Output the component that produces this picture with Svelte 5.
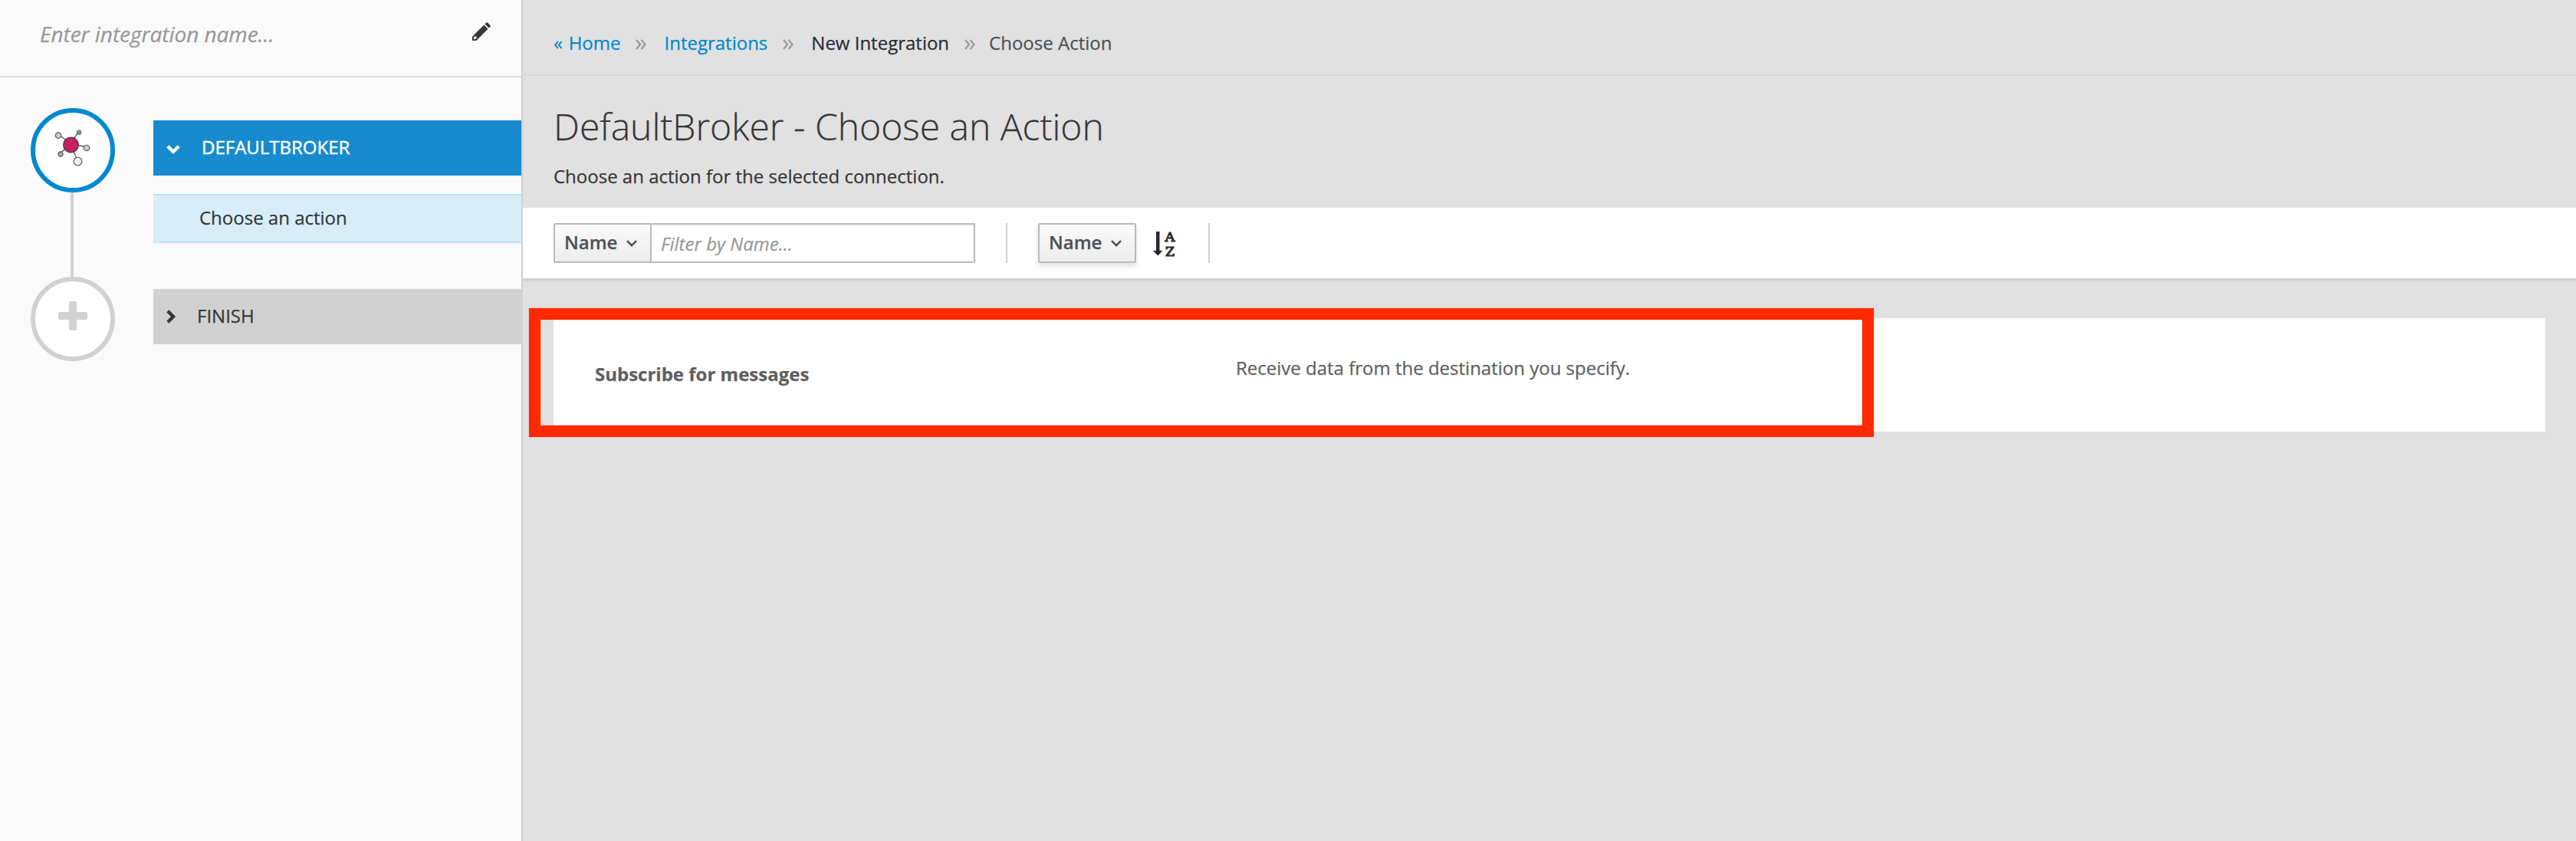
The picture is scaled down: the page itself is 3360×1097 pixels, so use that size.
<script>
  const crumbs = [
    { label: 'Integrations', kind: 'link', cls: 'c2' },
    { label: 'New Integration', kind: 'dark', cls: 'c3' },
    { label: 'Choose Action', kind: 'muted', cls: 'c4' }
  ];
  const actions = [
    { name: 'Subscribe for messages', description: 'Receive data from the destination you specify.' }
  ];
</script>

{#snippet caret()}
  <svg class="caret" width="14" height="9" viewBox="0 0 14 9"><path d="M1 1.2 7 7.2 13 1.2" /></svg>
{/snippet}

<div class="app">
  <aside>
    <header class="name-bar">
      <span class="name">Enter integration name...</span>
      <svg class="pencil" width="24" height="24" viewBox="0 0 24 24">
        <path d="M16.5 2.4 18.3.6Q19.2-.2 20.1.6L23.4 3.9Q24.3 4.9 23.4 5.8L21.6 7.500Z" />
        <path fill-rule="evenodd" d="M15.3 3.500 20.500 8.700 5.300 24H0V18.700ZM1.900 19.700V22.100H4.400L5.700 20.800 5.500 18.600 3.200 18.300Z" />
      </svg>
    </header>
    <div class="steps">
      <div class="track">
        <div class="node active">
          <svg width="44" height="48" viewBox="0 0 44 48">
            <g stroke="#555" stroke-width="1.3">
              <path d="M18.500 18 30 2.500M18.500 18 3 6M18.500 18 40 23M18.500 18 6 31M18.500 18 28 40" />
            </g>
            <g stroke="#666" stroke-width="1.3">
              <circle cx="30" cy="3.700" r="2.500" fill="#999" />
              <circle cx="3" cy="7.700" r="3.700" fill="#ccc" />
              <circle cx="40" cy="24" r="3.700" fill="#ccc" />
              <circle cx="6" cy="32" r="3" fill="#aaa" />
              <circle cx="28.500" cy="41.500" r="5.300" fill="#f0f0f0" />
              <circle cx="19.500" cy="20" r="9.800" fill="#c62163" stroke="#4a3340" />
            </g>
          </svg>
        </div>
        <div class="line"></div>
        <div class="node">
          <svg width="38" height="38" viewBox="0 0 38 38"><path fill="#d1d1d1" d="M16.500 0h5a2.500 2.500 0 0 1 2.500 2.500V14h11.500a2.500 2.500 0 0 1 2.500 2.500v5a2.500 2.500 0 0 1-2.500 2.500H24v11.500a2.500 2.500 0 0 1-2.500 2.500h-5a2.500 2.500 0 0 1-2.500-2.500V24H2.500A2.500 2.500 0 0 1 0 21.500v-5A2.500 2.500 0 0 1 2.500 14H14V2.500A2.500 2.500 0 0 1 16.500 0Z" /></svg>
        </div>
      </div>
      <div class="labels">
        <div class="step current">
          <svg width="18" height="12" viewBox="0 0 18 12"><path d="M1.800 1.800 9 9 16.200 1.800" /></svg>
          <span>DEFAULTBROKER</span>
        </div>
        <div class="sub"><span>Choose an action</span></div>
        <div class="step finish">
          <svg width="12" height="18" viewBox="0 0 12 18"><path d="M1.800 1.800 9 9 1.800 16.200" /></svg>
          <span>FINISH</span>
        </div>
      </div>
    </div>
  </aside>

  <main>
    <nav>
      <span class="link c1">« Home</span>
      {#each crumbs as c}
        <svg class="sep" width="14" height="14" viewBox="0 0 14 14"><path d="M1 1 6 7 1 13M7.500 1 12.500 7 7.500 13" /></svg>
        <span class="{c.kind} {c.cls}">{c.label}</span>
      {/each}
    </nav>
    <section class="heading">
      <h1>DefaultBroker - Choose an Action</h1>
      <p>Choose an action for the selected connection.</p>
    </section>
    <section class="toolbar">
      <div class="btn"><span>Name</span>{@render caret()}</div>
      <div class="input"><span>Filter by Name...</span></div>
      <i class="rule first"></i>
      <div class="btn raised"><span>Name</span>{@render caret()}</div>
      <svg class="sort" width="32" height="34" viewBox="0 0 32 34">
        <path d="M4 1H8.500V26H12.500L6.300 32.500 0 26H4Z" />
        <text x="15.500" y="13.500" textLength="13" lengthAdjust="spacingAndGlyphs">A</text>
        <text x="16" y="32.500" textLength="12" lengthAdjust="spacingAndGlyphs">Z</text>
      </svg>
      <i class="rule"></i>
    </section>
    <section class="list">
      {#each actions as a}
        <article>
          <strong>{a.name}</strong>
          <span class="desc">{a.description}</span>
          <div class="highlight"></div>
        </article>
      {/each}
    </section>
  </main>
</div>

<style>
  :global(body) { background: #e1e1e1; }
  * { box-sizing: border-box; }
  .app { display: flex; width: 3360px; height: 1097px; overflow: hidden; font: 24px/40px "Open Sans", sans-serif; color: #363636; white-space: nowrap; -webkit-text-stroke: 0.25px; }
  svg { display: block; flex: none; overflow: visible; }
  aside { flex: none; width: 682px; background: #fafafa; border-right: 2px solid #d1d1d1; }
  .name-bar { height: 101px; border-bottom: 2px solid #d9d9d9; display: flex; justify-content: space-between; align-items: flex-start; padding: 24px 40px 0 52px; }
  .name { font-size: 28px; font-style: italic; color: #999; line-height: 40px; letter-spacing: -0.05px; }
  .pencil { margin-top: 5px; fill: #363636; }
  .steps { display: flex; padding-top: 40px; }
  .track { width: 200px; padding-left: 40px; display: flex; flex-direction: column; }
  .node { width: 110px; height: 110px; border: 6px solid #d1d1d1; border-radius: 50%; background: #fff; display: flex; padding: 26px 0 0 30px; }
  .node.active { border-color: #0088d2; padding: 22px 0 0 27px; }
  .line { width: 4px; height: 110px; background: #d1d1d1; margin-left: 52px; }
  .labels { flex: 1; padding-top: 16px; }
  .step { height: 72px; display: flex; align-items: center; padding-left: 17px; }
  .step svg { fill: none; stroke-width: 4.400; stroke: currentColor; margin-top: 4px; }
  .finish svg { margin-top: 0; }
  .current { background: #188bcf; color: #fff; }
  .current span { margin: 0 0 2px 28px; -webkit-text-stroke: 0.4px; }
  .finish { background: #d1d1d1; }
  .finish span { margin: 0 0 2px 28px; }
  .sub { height: 64px; margin: 24px 0 60px; padding: 9px 0 0 60px; background: #d7eefa; border: solid #bee1f4; border-width: 2px 0; }
  main { flex: 1; min-width: 0; background: #e1e1e1; }
  nav { height: 99px; border-bottom: 2px solid #d8d8d8; padding: 36px 0 0 40px; display: flex; align-items: flex-start; }
  .link { color: #0088ce; }
  .c1 { word-spacing: 1.500px; }
  .dark { color: #292e34; }
  .muted { color: #4d5258; }
  .sep { margin: 15px 0 0 20px; fill: none; stroke: #9c9c9c; stroke-width: 2.400; }
  .c2, .c3 { margin-left: 23px; }
  .c4 { margin-left: 18px; }
  .heading { height: 172px; padding: 34px 0 0 40px; }
  h1 { margin: 0; font-size: 48px; font-weight: 300; line-height: 64px; }
  p { margin: 13px 0 0; }
  .toolbar { height: 96px; background: #fff; border-bottom: 2px solid #d7d7d7; box-shadow: inset 0 -2px #d0d0d0; padding: 20px 0 0 40px; display: flex; align-items: flex-start; }
  .btn { width: 128px; height: 52px; border: 2px solid #bbb; border-radius: 2px; background: linear-gradient(#fafafa, #ededed); color: #4d5258; font-weight: 600; display: flex; justify-content: space-between; padding: 3px 17px 0 12px; }
  .raised { box-shadow: 0 4px 6px rgba(3, 3, 3, 0.12); }
  .caret { margin-top: 17px; fill: none; stroke: #4d5258; stroke-width: 2.500; }
  .input { width: 422px; height: 52px; border: 2px solid #bbb; border-left: 0; padding: 5px 0 0 12px; font-style: italic; color: #999; box-shadow: inset 0 2px 2px rgba(3, 3, 3, 0.075); }
  .rule { width: 2px; height: 52px; background: #d1d1d1; }
  .rule.first { margin: 0 40px; }
  .sort { margin: 10px 0 0 22px; width: 32px; fill: #292929; }
  .sort + .rule { margin-left: 40px; }
  .sort text { font: 17.500px "DejaVu Serif", serif; stroke: #292929; stroke-width: 1.200px; }
  .list { padding: 48px 40px 0; }
  article { position: relative; height: 148px; background: #fff; color: #5f5f5f; display: grid; grid-template-columns: 836px 1fr; padding: 45px 0 0 54px; align-items: start; }
  strong { margin-top: 8px; font-weight: 700; }
  .highlight { position: absolute; left: -32px; top: -13px; width: 1754px; height: 168px; border: 15px solid #ff2a00; box-shadow: 0 0 0 1px rgba(255, 90, 60, 0.2), inset 0 0 0 1px rgba(255, 90, 60, 0.2); }
</style>
